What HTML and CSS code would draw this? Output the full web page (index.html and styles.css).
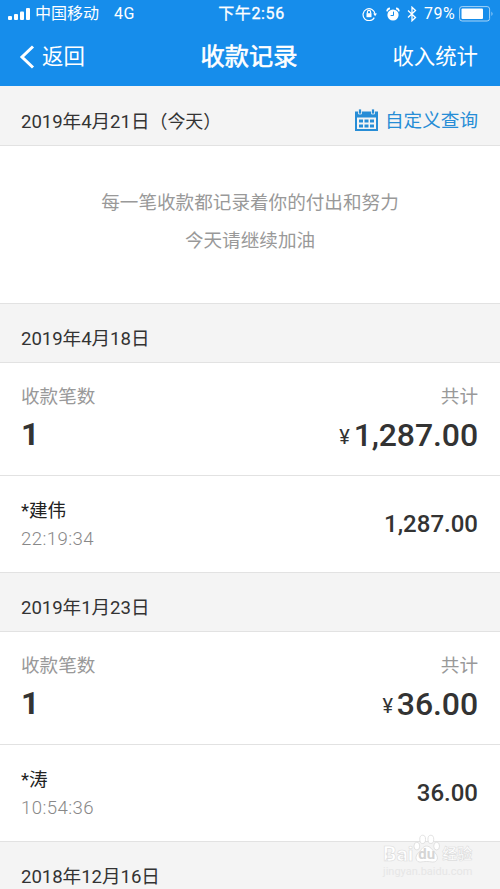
FILE: index.html
```
<!DOCTYPE html>
<html lang="zh-CN">
<head>
<meta charset="utf-8">
<title>收款记录</title>
<link rel="stylesheet" href="styles.css">
</head>
<body>
<header class="top">
  <div class="status">
    <div class="status-left">
      <svg class="signal" width="23" height="14" viewBox="0 0 23 14" fill="#fff"><rect x="0" y="9" width="4" height="4" rx="1"/><rect x="6" y="7" width="4" height="6" rx="1"/><rect x="12" y="4.500" width="4" height="8.500" rx="1"/><rect x="18" y="1" width="4" height="12" rx="1"/></svg>
      <span class="carrier">中国移动</span><span class="network">4G</span>
    </div>
    <div class="clock">下午2:56</div>
    <div class="status-right">
      <svg class="lock" width="16" height="14" viewBox="0 0 16 14" fill="none" stroke="#fff" stroke-width="1.200"><path d="M12.300 10.600A6 6 0 1 1 13 7"/><path d="M11.200 6.400h3.800L13.100 9.200z" fill="#fff" stroke="none"/><rect x="4.500" y="6.200" width="5" height="4" fill="#fff" stroke="none"/><path d="M5.400 6.500V5a1.600 1.600 0 0 1 3.200 0v1.500"/></svg>
      <svg class="alarm" width="14" height="15" viewBox="0 0 14 15"><circle cx="7" cy="8" r="5.600" fill="#fff"/><path d="M1 4.300Q1.300 1.700 4 1.400M13 4.300Q12.700 1.700 10 1.400" fill="none" stroke="#fff" stroke-width="1.600"/><path d="M7.500 4.600V8.500H4.600" fill="none" stroke="#168deb" stroke-width="1"/></svg>
      <svg class="bluetooth" width="10" height="16" viewBox="0 0 10 16" fill="none" stroke="#fff" stroke-width="1.300"><path d="M1 4.500l7.500 7L5 14.800V1.200l3.500 3.300L1 11.500"/></svg>
      <span class="percent">79%</span>
      <svg class="battery" width="36" height="16" viewBox="0 0 36 16"><rect x=".6" y=".6" width="30" height="14.400" rx="2.500" fill="none" stroke="#a6d4f8"/><rect x="2.500" y="2.500" width="21.500" height="10.600" rx="1" fill="#fff"/><path d="M32.500 5.500q2 2.300 0 4.600z" fill="#a6d4f8"/></svg>
    </div>
  </div>
  <nav class="nav">
    <div class="back"><svg width="16" height="24" viewBox="0 0 16 24" fill="none" stroke="#fff" stroke-width="3"><path d="M14 1.500L3 12l11 10.500"/></svg><span>返回</span></div>
    <h1 class="title">收款记录</h1>
    <div class="stats">收入统计</div>
  </nav>
</header>
<main>
  <div class="date today">
    <span>2019年4月21日<span class="paren">（今天）</span></span>
    <div class="query">
      <svg width="23" height="23" viewBox="0 0 23 23"><path d="M0 2.500h23V22H0z" fill="#278dd6"/><path d="M2 8.500h19V20H2z" fill="#f4f4f4"/><path d="M4 10.500h4v3H4zM9.500 10.500h4v3h-4zM15 10.500h4v3h-4zM4 15.500h4v3H4zM9.500 15.500h4v3h-4zM15 15.500h4v3h-4z" fill="#278dd6"/><path d="M3.500 0h3v5h-3zM16.500 0h3v5h-3z" fill="#278dd6" stroke="#f4f4f4" stroke-width=".8"/></svg>
      <span>自定义查询</span>
    </div>
  </div>
  <section class="message"><p>每一笔收款都记录着你的付出和努力</p><p>今天请继续加油</p></section>

  <div class="date"><span>2019年4月18日</span></div>
  <section class="summary">
    <div><div class="label">收款笔数</div><div class="count">1</div></div>
    <div class="total"><div class="label">共计</div><div class="sum"><span class="yen">¥</span>1,287.00</div></div>
  </section>
  <section class="record">
    <div><div class="name">*建伟</div><div class="time">22:19:34</div></div>
    <div class="amount">1,287.00</div>
  </section>

  <div class="date"><span>2019年1月23日</span></div>
  <section class="summary">
    <div><div class="label">收款笔数</div><div class="count">1</div></div>
    <div class="total"><div class="label">共计</div><div class="sum"><span class="yen">¥</span>36.00</div></div>
  </section>
  <section class="record">
    <div><div class="name">*涛</div><div class="time">10:54:36</div></div>
    <div class="amount">36.00</div>
  </section>

  <div class="date"><span>2018年12月16日</span></div>
</main>
<div class="watermark">
  <div class="brand">
    <span class="bai">Bai</span>
    <span class="paw"><svg width="27" height="30" viewBox="0 0 28 30" fill="#fff" stroke="#d9d9d9" stroke-width=".8"><ellipse cx="4" cy="12" rx="3" ry="4"/><ellipse cx="10" cy="5" rx="3" ry="4.300"/><ellipse cx="18.500" cy="5" rx="3" ry="4.300"/><ellipse cx="24.500" cy="12" rx="3" ry="4"/><path d="M14 12c-4 0-5 4-8 6.500C1 23 3 29 8 28.500c4-.7 8-.7 12 0 6 .5 7-5.500 2.500-10C19.500 15.500 18 12 14 12z"/></svg><span class="du">du</span></span>
    <span class="jingyan">经验</span>
  </div>
  <div class="site">jingyan.baidu.com</div>
</div>
</body>
</html>
```

FILE: styles.css
```
* { box-sizing: border-box; }
body {
  margin: 0;
  height: 889px;
  overflow: hidden;
  position: relative;
  background: #fff;
  color: #333;
  font-family: Roboto, "Noto Sans CJK SC", sans-serif;
  font-size: 18.6px;
}
svg { display: block; flex: none; }
.top { height: 86px; background: #168deb; color: #fff; }
.status {
  height: 28px;
  display: grid;
  grid-template-columns: 1fr auto 1fr;
  align-items: center;
  padding: 0 5px 0 8px;
  font-size: 16px;
  line-height: 28px;
}
.status-left, .status-right { display: flex; align-items: center; }
.status-right { justify-content: flex-end; }
.carrier { margin-left: 4px; }
.network { margin-left: 15px; letter-spacing: .4px; }
.clock { -webkit-text-stroke: .3px #fff; letter-spacing: .6px; }
.alarm { margin-left: 8px; }
.bluetooth { margin-left: 7px; }
.percent { margin: 0 4px 0 7px; letter-spacing: .4px; }
.nav {
  height: 55px;
  display: grid;
  grid-template-columns: 1fr auto 1fr;
  align-items: center;
  padding: 0 22px 0 19px;
  font-size: 21.4px;
  line-height: 55px;
}
.back { display: flex; align-items: center; gap: 7px; }
.title { margin: 2px 0 0 1px; font-size: 24.2px; font-weight: 400; -webkit-text-stroke: .6px #fff; }
.stats { text-align: right; }
.date {
  height: 60px;
  display: flex;
  align-items: center;
  justify-content: space-between;
  padding: 12px 22px 0 21px;
  background: #f4f4f4;
  border-top: 1px solid #e2e2e2;
  border-bottom: 1px solid #e2e2e2;
  line-height: 28px;
  letter-spacing: -.05px;
}
.today { border-top-color: #f4f4f4; }
.paren { font-size: 18px; }
.query { display: flex; align-items: center; gap: 7px; color: #278dd6; margin-top: -3px; letter-spacing: 0; }
.message { height: 157px; padding-top: 39px; text-align: center; color: #999; }
.message p { margin: 0; line-height: 37.5px; }
.summary {
  height: 113px;
  display: flex;
  justify-content: space-between;
  padding: 20px 22px 0 21px;
  border-bottom: 1px solid #e2e2e2;
}
.label { line-height: 28px; color: #999; }
.total { text-align: right; }
.count, .sum { font-size: 32px; line-height: 49px; font-weight: 500; }
.count { font-weight: 700; line-height: 46px; }
.sum { letter-spacing: -.1px; }
.yen { font-size: 20px; font-weight: 400; margin-right: 4px; position: relative; top: -2px; }
.record {
  height: 96px;
  display: flex;
  align-items: center;
  justify-content: space-between;
  padding: 2px 22px 0 21px;
}
.name { line-height: 28px; color: #222; }
.time { line-height: 28px; color: #888; font-weight: 300; letter-spacing: .4px; }
.amount { font-size: 24px; font-weight: 500; margin-top: -2px; }
.watermark { position: absolute; left: 383px; top: 834px; color: #fff; }
.brand { display: flex; align-items: center; height: 30px; }
.bai { font-size: 21px; font-weight: 700; line-height: 20px; margin-top: 10px; -webkit-text-stroke: .6px #dcdcdc; }
.paw { position: relative; }
.du { position: absolute; left: 5px; top: 12px; font-size: 15px; font-weight: 700; line-height: 16px; color: #d5d5d5; }
.jingyan { font-size: 15px; line-height: 20px; margin: 10px 0 0 2px; font-weight: 700; -webkit-text-stroke: .6px #dcdcdc; }
.site { font-size: 11px; line-height: 12px; margin-top: 2px; color: #e6e6e6; }
```
